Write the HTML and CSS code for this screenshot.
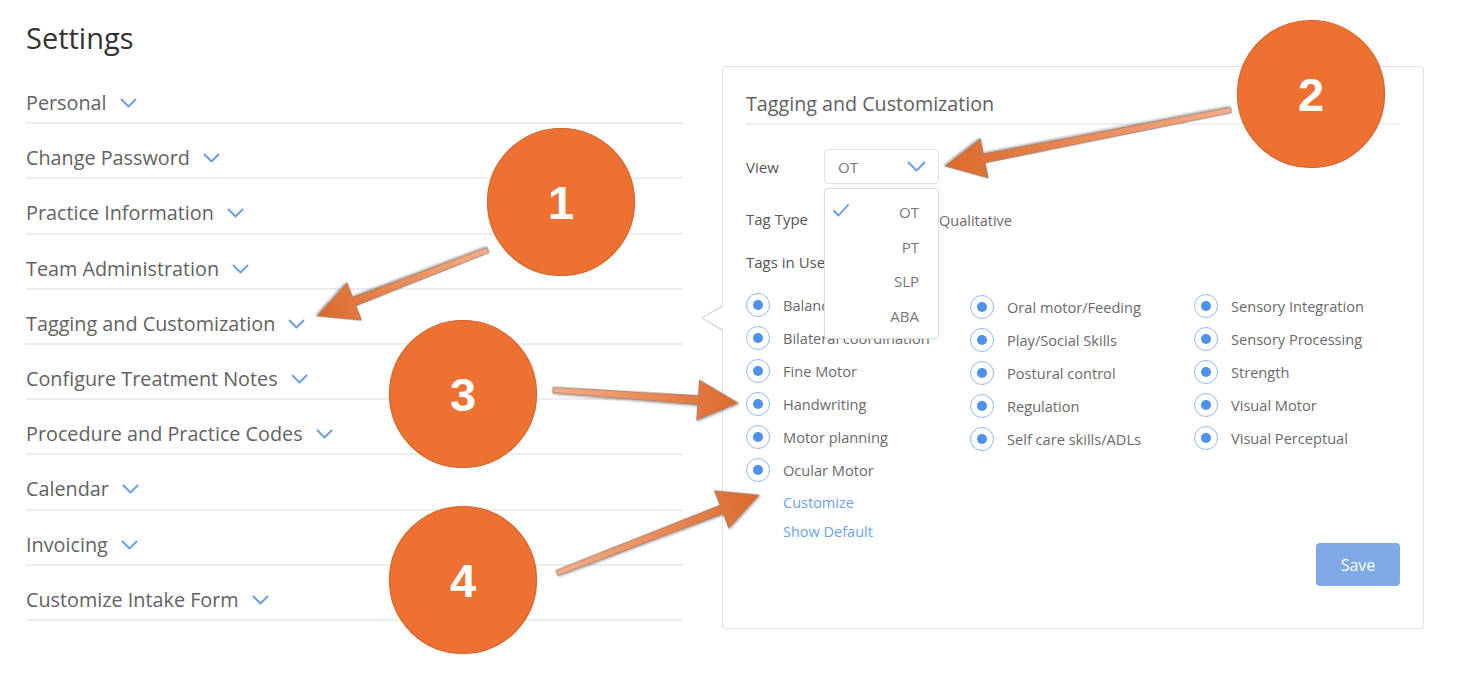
FILE: index.html
```html
<!DOCTYPE html>
<html lang="en">
<head>
<meta charset="utf-8">
<title>Settings</title>
<link rel="stylesheet" href="styles.css">
</head>
<body>
<div class="page">
  <div class="sidebar">
    <h1 class="title">Settings</h1>
    <ul class="menu">
      <li class="menu-item"><span>Personal</span><svg class="chev" viewBox="0 0 17 10"><polyline points="1.5,1.5 8.5,8.5 15.5,1.5"/></svg></li>
      <li class="menu-item"><span>Change Password</span><svg class="chev" viewBox="0 0 17 10"><polyline points="1.5,1.5 8.5,8.5 15.5,1.5"/></svg></li>
      <li class="menu-item"><span>Practice Information</span><svg class="chev" viewBox="0 0 17 10"><polyline points="1.5,1.5 8.5,8.5 15.5,1.5"/></svg></li>
      <li class="menu-item"><span>Team Administration</span><svg class="chev" viewBox="0 0 17 10"><polyline points="1.5,1.5 8.5,8.5 15.5,1.5"/></svg></li>
      <li class="menu-item"><span>Tagging and Customization</span><svg class="chev" viewBox="0 0 17 10"><polyline points="1.5,1.5 8.5,8.5 15.5,1.5"/></svg></li>
      <li class="menu-item"><span>Configure Treatment Notes</span><svg class="chev" viewBox="0 0 17 10"><polyline points="1.5,1.5 8.5,8.5 15.5,1.5"/></svg></li>
      <li class="menu-item"><span>Procedure and Practice Codes</span><svg class="chev" viewBox="0 0 17 10"><polyline points="1.5,1.5 8.5,8.5 15.5,1.5"/></svg></li>
      <li class="menu-item"><span>Calendar</span><svg class="chev" viewBox="0 0 17 10"><polyline points="1.5,1.5 8.5,8.5 15.5,1.5"/></svg></li>
      <li class="menu-item"><span>Invoicing</span><svg class="chev" viewBox="0 0 17 10"><polyline points="1.5,1.5 8.5,8.5 15.5,1.5"/></svg></li>
      <li class="menu-item"><span>Customize Intake Form</span><svg class="chev" viewBox="0 0 17 10"><polyline points="1.5,1.5 8.5,8.5 15.5,1.5"/></svg></li>
    </ul>
  </div>

  <section class="panel">
    <h2 class="panel-title">Tagging and Customization</h2>

    <div class="view-row">
      <span class="label">View</span>
      <div class="select-wrap">
        <div class="select"><span>OT</span><svg class="select-chev" viewBox="0 0 19 11"><polyline points="1.5,1.5 9.5,9.5 17.5,1.5"/></svg></div>
        <ul class="dropdown">
          <li class="opt"><svg class="check" viewBox="0 0 16 13"><polyline points="1,7 5.5,11.5 15,1"/></svg><span class="opt-text">OT</span></li>
          <li class="opt"><span class="opt-text">PT</span></li>
          <li class="opt"><span class="opt-text">SLP</span></li>
          <li class="opt"><span class="opt-text">ABA</span></li>
        </ul>
      </div>
    </div>

    <div class="type-row">
      <span class="label">Tag Type</span>
      <span class="type-opt first"><span class="radio"></span><span>Skill</span></span>
      <span class="type-opt"><span class="radio"></span><span>Qualitative</span></span>
    </div>

    <div class="tags-label">Tags in Use</div>

    <div class="tag-grid">
      <div class="tag-col">
        <div class="tag"><span class="radio"></span><span>Balance</span></div>
        <div class="tag"><span class="radio"></span><span>Bilateral coordination</span></div>
        <div class="tag"><span class="radio"></span><span>Fine Motor</span></div>
        <div class="tag"><span class="radio"></span><span>Handwriting</span></div>
        <div class="tag"><span class="radio"></span><span>Motor planning</span></div>
        <div class="tag"><span class="radio"></span><span>Ocular Motor</span></div>
      </div>
      <div class="tag-col col2">
        <div class="tag"><span class="radio"></span><span>Oral motor/Feeding</span></div>
        <div class="tag"><span class="radio"></span><span>Play/Social Skills</span></div>
        <div class="tag"><span class="radio"></span><span>Postural control</span></div>
        <div class="tag"><span class="radio"></span><span>Regulation</span></div>
        <div class="tag"><span class="radio"></span><span>Self care skills/ADLs</span></div>
      </div>
      <div class="tag-col col3">
        <div class="tag"><span class="radio"></span><span>Sensory Integration</span></div>
        <div class="tag"><span class="radio"></span><span>Sensory Processing</span></div>
        <div class="tag"><span class="radio"></span><span>Strength</span></div>
        <div class="tag"><span class="radio"></span><span>Visual Motor</span></div>
        <div class="tag"><span class="radio"></span><span>Visual Perceptual</span></div>
      </div>
    </div>

    <div class="links">
      <a class="link" href="#">Customize</a>
      <a class="link" href="#">Show Default</a>
    </div>
    <div class="actions">
      <button class="save" type="button">Save</button>
    </div>
  </section>
</div>

<svg class="annotations" width="1479" height="698" viewBox="0 0 1479 698">
  <defs>
    <linearGradient id="arrowGrad" x1="0" y1="0" x2="1" y2="0">
      <stop offset="0" stop-color="#f6ae88"/>
      <stop offset="1" stop-color="#dc692b"/>
    </linearGradient>
    <filter id="shadow" x="-20%" y="-50%" width="140%" height="200%">
      <feDropShadow dx="0.8" dy="1.2" stdDeviation="0.8" flood-color="#000" flood-opacity="0.35"/>
    </filter>
  </defs>

  <g class="arrow" transform="translate(488 250) rotate(158.9)">
    <polygon points="0,-2.8 143.3,-4.5 143.3,-20 183.3,0 143.3,20 143.3,4.5 0,2.8"/>
  </g>
  <g class="arrow" transform="translate(1231 110) rotate(168.9)">
    <polygon points="0,-2.8 251.4,-4.5 251.4,-20 291.4,0 251.4,20 251.4,4.5 0,2.8"/>
  </g>
  <g class="arrow" transform="translate(553 390) rotate(4.0)">
    <polygon points="0,-2.8 145.5,-4.5 145.5,-20 185.5,0 145.5,20 145.5,4.5 0,2.8"/>
  </g>
  <g class="arrow" transform="translate(557 573) rotate(-21.1)">
    <polygon points="0,-2.8 176.5,-4.5 176.5,-20 216.5,0 176.5,20 176.5,4.5 0,2.8"/>
  </g>

  <circle class="badge" cx="561" cy="202" r="73.5"/>
  <text class="badge-num" x="561" y="219">1</text>
  <circle class="badge" cx="1311" cy="94" r="73.5"/>
  <text class="badge-num" x="1311" y="111">2</text>
  <circle class="badge" cx="463" cy="394" r="73.5"/>
  <text class="badge-num" x="463" y="411">3</text>
  <circle class="badge" cx="463" cy="580" r="73.5"/>
  <text class="badge-num" x="463" y="597">4</text>
</svg>
</body>
</html>
```

FILE: styles.css
```css
* { box-sizing: border-box; }

body {
  margin: 0;
  font-family: "Open Sans", "DejaVu Sans", sans-serif;
  background: #ffffff;
  color: #606060;
}

.page {
  display: flex;
  align-items: flex-start;
}

/* ---------- Sidebar ---------- */
.sidebar {
  width: 657px;
  margin-left: 26px;
  flex: none;
}

.title {
  margin: 0 0 13px;
  padding-top: 20px;
  font-size: 29px;
  font-weight: 400;
  line-height: 36px;
  color: #333333;
}

.menu {
  list-style: none;
  margin: 0;
  padding: 0;
}

.menu-item {
  display: flex;
  align-items: center;
  gap: 13px;
  padding: 21px 0 6.2px;
  line-height: 26px;
  font-size: 19.8px;
  color: #626262;
  border-bottom: 2px solid #ededed;
}

.chev {
  width: 17px;
  height: 10px;
  flex: none;
}

.chev polyline,
.select-chev polyline {
  fill: none;
  stroke: #6d9fe9;
  stroke-width: 2;
  stroke-linecap: round;
  stroke-linejoin: round;
}

/* ---------- Panel ---------- */
.panel {
  position: relative;
  width: 702px;
  flex: none;
  margin-left: 39px;
  margin-top: 66px;
  padding: 24px 23px 42px;
  border: 1px solid #e0e0e0;
  border-radius: 4px;
  box-shadow: 0 0 1px rgba(0, 0, 0, 0.06);
  background: #fff;
}

.panel::before,
.panel::after {
  content: "";
  position: absolute;
  width: 0;
  height: 0;
  border-style: solid;
}

.panel::before {
  left: -22px;
  top: 238px;
  border-width: 13px 21px 13px 0;
  border-color: transparent #d9d9d9 transparent transparent;
}

.panel::after {
  left: -20px;
  top: 239px;
  border-width: 12px 21px 12px 0;
  border-color: transparent #ffffff transparent transparent;
}

.panel-title {
  margin: 0;
  font-size: 19.7px;
  font-weight: 400;
  line-height: 26px;
  color: #606060;
  padding-bottom: 6px;
  border-bottom: 2px solid #efefef;
}

.label {
  width: 78px;
  flex: none;
  font-size: 15px;
  color: #555555;
}

.view-row {
  display: flex;
  align-items: center;
  margin-top: 24px;
}

.select-wrap {
  position: relative;
}

.select {
  width: 115px;
  height: 35px;
  border: 1px solid #e2e2e2;
  border-radius: 4px;
  display: flex;
  align-items: center;
  justify-content: space-between;
  padding: 0 12px 0 13px;
  font-size: 15px;
  color: #777777;
}

.select-chev {
  width: 19px;
  height: 11px;
}

.dropdown {
  position: absolute;
  top: 39px;
  left: 0;
  width: 115px;
  margin: 0;
  padding: 6px 19px 5px 8px;
  list-style: none;
  background: #ffffff;
  border: 1px solid #dcdcdc;
  border-radius: 4px;
  box-shadow: 0 1px 3px rgba(0, 0, 0, 0.06);
  z-index: 5;
}

.opt {
  display: flex;
  align-items: center;
  height: 34.5px;
  font-size: 15px;
  color: #777777;
}

.opt-text {
  margin-left: auto;
}

.check {
  width: 16px;
  height: 13px;
  margin-top: -3px;
}

.check polyline {
  fill: none;
  stroke: #5a9bef;
  stroke-width: 1.8;
  stroke-linecap: round;
  stroke-linejoin: round;
}

.type-row {
  display: flex;
  align-items: center;
  height: 24px;
  margin-top: 23px;
}

.type-opt {
  display: flex;
  align-items: center;
  gap: 10px;
  font-size: 14.5px;
  color: #6a6a6a;
}

.type-opt.first {
  width: 79px;
  margin-left: 2px;
  overflow: hidden;
}

.type-opt span:last-child {
  margin-top: 3px;
}

.tags-label {
  margin-top: 19px;
  line-height: 24px;
  font-size: 15px;
  color: #555555;
}

.tag-grid {
  display: grid;
  grid-template-columns: 224px 224px 1fr;
  margin-top: 19px;
}

.tag-col {
  display: flex;
  flex-direction: column;
  gap: 9px;
}

.tag-col.col2 { margin-top: 2px; }
.tag-col.col3 { margin-top: 1px; }

.tag {
  display: flex;
  align-items: center;
  gap: 13px;
  height: 24px;
  font-size: 14.6px;
  color: #6a6a6a;
  white-space: nowrap;
}

.radio {
  width: 24px;
  height: 24px;
  flex: none;
  border: 1.8px solid #8fb9f3;
  border-radius: 50%;
  display: flex;
  align-items: center;
  justify-content: center;
  background: #fff;
}

.radio::after {
  content: "";
  width: 10px;
  height: 10px;
  border-radius: 50%;
  background: #4f90ea;
}

.links {
  display: flex;
  flex-direction: column;
  align-items: flex-start;
  gap: 9px;
  margin-top: 11px;
  padding-left: 37px;
}

.link {
  font-size: 14.5px;
  line-height: 20px;
  color: #6aa3ee;
  text-decoration: none;
}

.actions {
  display: flex;
  justify-content: flex-end;
  margin-top: 1px;
}

.save {
  width: 84px;
  height: 43px;
  border: none;
  border-radius: 4px;
  background: #80a9e8;
  color: #ffffff;
  font-family: "Open Sans", sans-serif;
  font-size: 16px;
}

/* ---------- Annotations overlay ---------- */
.annotations {
  position: absolute;
  left: 0;
  top: 0;
  pointer-events: none;
  z-index: 10;
}

.arrow polygon {
  fill: url(#arrowGrad);
  stroke: #8f7565;
  stroke-width: 0.8;
  stroke-linejoin: miter;
  filter: url(#shadow);
}

.badge {
  fill: #ed7131;
  stroke: #d5622a;
  stroke-width: 1.2;
}

.badge-num {
  fill: #ffffff;
  font-family: "Liberation Sans", Arial, sans-serif;
  font-weight: 700;
  font-size: 47px;
  text-anchor: middle;
}
```
